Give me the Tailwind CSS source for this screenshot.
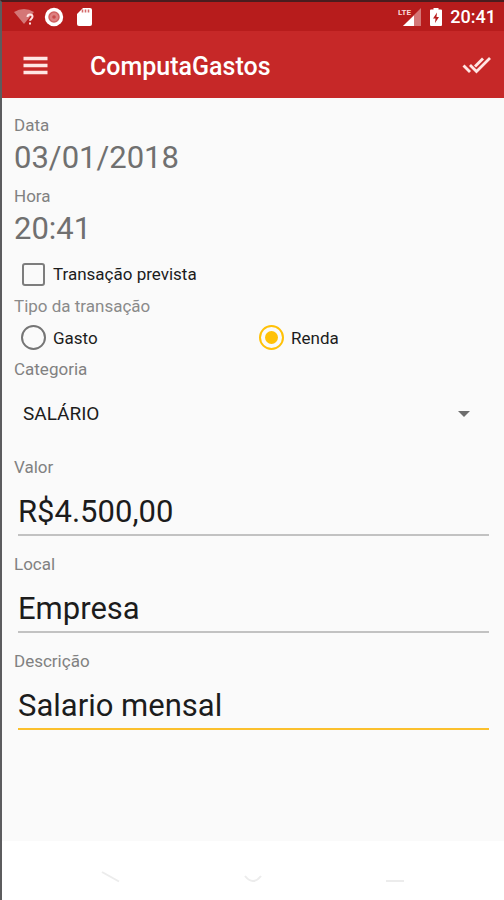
<!DOCTYPE html>
<html lang="pt-BR">
<head>
  <meta charset="UTF-8" />
  <meta name="viewport" content="width=device-width, initial-scale=1" />
  <title>ComputaGastos</title>
  <script src="https://cdn.jsdelivr.net/npm/@tailwindcss/browser@4"></script>
</head>
<body class="min-h-screen flex flex-col bg-[#fafafa] border-t-2 border-t-[#4a1c1e] border-l-2 border-l-[#5c5c5e] font-['Roboto',sans-serif] text-[17px] leading-6 text-[#1c1c1c]">
  <!-- Barra de status -->
  <div class="h-[29px] shrink-0 bg-[#b71c1c] text-white flex items-center justify-between pl-3 pr-2">
    <div class="flex items-center gap-2">
      <svg class="w-[22px] h-5" viewBox="0 0 22 20" aria-hidden="true">
        <path d="M0 5Q10 -1 20 5L10 17Z" fill="#fff" fill-opacity=".4" />
        <path d="M13.500 10q0-2.500 2.500-2.500t2.500 2.300c0 1.800-2.400 2-2.400 4M16 15.500v2" fill="none" stroke="#ffe4e4" stroke-width="2" />
      </svg>
      <svg class="w-5 h-5" viewBox="0 0 20 20" aria-hidden="true">
        <circle cx="10" cy="10" r="9.200" fill="#fff" />
        <circle cx="10" cy="10" r="5" fill="#dd8080" stroke="#d06060" stroke-width="1.500" />
        <circle cx="10" cy="10" r="1.800" fill="#c84a4a" />
      </svg>
      <svg class="w-5 h-5 ml-1" viewBox="0 0 20 20" aria-hidden="true">
        <path d="M7 1h7q2 0 2 2v14q0 2-2 2H3q-2 0-2-2V7Z" fill="#fff" />
        <path d="M6.500 2.500v3M9.500 2.500v3M12.500 2.500v3" stroke="#d46a6a" stroke-width="1.600" />
      </svg>
    </div>
    <div class="flex items-center gap-2">
      <svg class="w-6 h-5" viewBox="0 0 24 20" aria-hidden="true">
        <path d="M23 1v18H5Z" fill="#fff" fill-opacity=".4" />
        <path d="M16 8.500V19H5Z" fill="#fff" />
        <text x="0" y="8" font-size="8" font-weight="700" fill="#fbdada">LTE</text>
      </svg>
      <svg class="w-3 h-5" viewBox="0 0 12 20" aria-hidden="true">
        <path d="M3.500 1h5v1.500H11q1 0 1 1V18q0 1-1 1H1q-1 0-1-1V3.500q0-1 1-1h2.500Z" fill="#fff" />
        <path d="M7 5.500 3 11.500h2.500L5 16l4-6H6.500Z" fill="#b71c1c" />
      </svg>
      <span class="text-lg font-medium">20:41</span>
    </div>
  </div>

  <header class="h-[67px] shrink-0 bg-[#c62828] text-white flex items-center pl-5 pr-3">
    <button type="button" aria-label="Menu" class="w-7 h-7">
      <svg class="w-7 h-7" viewBox="0 0 28 28" aria-hidden="true">
        <path d="M1.500 7.500h24M1.500 14.500h24M1.500 21.500h24" stroke="#ffe6e4" stroke-width="3.600" />
      </svg>
    </button>
    <h1 class="flex-1 pl-10 pt-1 text-[25px] font-medium">ComputaGastos</h1>
    <button type="button" aria-label="Salvar" class="w-[30px] h-7">
      <svg class="w-[30px] h-7" viewBox="0 0 30 28" fill="none" stroke="#ffe6e4" stroke-width="2.800" aria-hidden="true">
        <path d="M1.500 14.500 8 21" />
        <path d="M8 14 14.500 20.500 28 7" />
        <path d="M13 15.500 21 7.500" />
      </svg>
    </button>
  </header>

  <main class="flex-1">
    <form id="form-transacao" class="pt-[15px] pl-3 pr-[15px]">
      <label for="data" class="block text-[#818181]">Data</label>
      <input id="data" type="text" value="03/01/2018" readonly class="block w-full h-10 mb-[7px] text-[31px] text-[#707070] outline-none" />
      <label for="hora" class="block text-[#818181]">Hora</label>
      <input id="hora" type="text" value="20:41" readonly class="block w-full h-10 mb-[6px] text-[31px] text-[#707070] outline-none" />

      <div class="h-10 flex items-center pl-2">
        <label class="flex items-center gap-2">
          <input type="checkbox" name="prevista" class="appearance-none w-[23px] h-[23px] rounded-[3px] border-2 border-[#7d7d7d] checked:bg-[#ffc107] checked:border-[#ffc107]" />
          Transação prevista
        </label>
      </div>

      <fieldset>
        <legend class="text-[#8a8a8a]">Tipo da transação</legend>
        <div class="h-[39px] grid grid-cols-2 gap-x-2 items-center pl-[7px]">
          <label class="flex items-center gap-[7px]">
            <input type="radio" name="tipo" value="gasto" class="appearance-none w-[25px] h-[25px] rounded-full border-2 border-[#757575] p-[4px] bg-clip-content checked:border-[#ffc107] checked:bg-[#ffc107]" />
            Gasto
          </label>
          <label class="flex items-center gap-[7px]">
            <input type="radio" name="tipo" value="renda" checked class="appearance-none w-[25px] h-[25px] rounded-full border-2 border-[#757575] p-[4px] bg-clip-content checked:border-[#ffc107] checked:bg-[#ffc107]" />
            Renda
          </label>
        </div>
      </fieldset>

      <label for="categoria" class="block text-[#818181]">Categoria</label>
      <div class="relative mb-2">
        <select id="categoria" class="appearance-none block w-full h-[66px] pl-[9px] pr-10 text-[19px] outline-none">
          <option>SALÁRIO</option>
        </select>
        <svg class="absolute right-[19px] top-[30px] w-3 h-[6px] pointer-events-none" viewBox="0 0 12 6" aria-hidden="true">
          <path d="M0 0h12L6 6Z" fill="#6d6d6d" />
        </svg>
      </div>

      <label for="valor" class="block text-[#818181]">Valor</label>
      <div class="pl-1 mb-4">
        <input id="valor" type="text" value="R$4.500,00" class="block w-full h-[57px] pt-[10px] border-b-2 border-[#c2c2c2] text-[31px] outline-none" />
      </div>
      <label for="local" class="block text-[#818181]">Local</label>
      <div class="pl-1 mb-4">
        <input id="local" type="text" value="Empresa" class="block w-full h-[57px] pt-[10px] border-b-2 border-[#c2c2c2] text-[31px] outline-none" />
      </div>
      <label for="descricao" class="block text-[#818181]">Descrição</label>
      <div class="pl-1 mb-4">
        <input id="descricao" type="text" value="Salario mensal" class="block w-full h-[57px] pt-[10px] border-b-2 border-[#fbc02d] text-[31px] outline-none" />
      </div>
    </form>
  </main>

  <!-- Barra de navegação -->
  <nav class="h-[59px] shrink-0 bg-white flex items-center justify-around px-[38px] pt-3">
    <button type="button" aria-label="Voltar" class="w-6 h-6">
      <svg class="w-6 h-6" viewBox="0 0 24 24" fill="none" stroke="#ececec" stroke-width="2" aria-hidden="true"><path d="M3 7 20 16.500" /></svg>
    </button>
    <button type="button" aria-label="Início" class="w-6 h-6">
      <svg class="w-6 h-6" viewBox="0 0 24 24" fill="none" stroke="#ececec" stroke-width="2" aria-hidden="true"><path d="M4 11Q12 21 20 11" /></svg>
    </button>
    <button type="button" aria-label="Recentes" class="w-6 h-6">
      <svg class="w-6 h-6" viewBox="0 0 24 24" fill="none" stroke="#ececec" stroke-width="2" aria-hidden="true"><path d="M3 16h18" /></svg>
    </button>
  </nav>
</body>
</html>
